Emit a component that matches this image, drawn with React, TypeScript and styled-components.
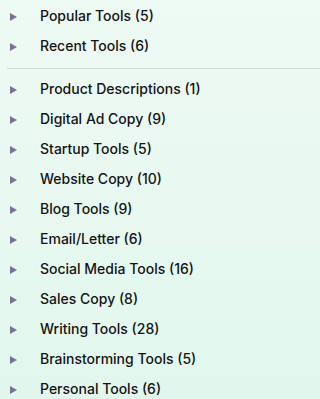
import React from "react";
import styled, { createGlobalStyle } from "styled-components";

const GlobalStyle = createGlobalStyle`
  html, body {
    margin: 0;
    padding: 0;
  }
  body {
    background: linear-gradient(180deg, #eefaf4 0%, #e1f7ed 100%);
    min-height: 399px;
    font-family: Inter, "Noto Sans", sans-serif;
  }
`;

const Sidebar = styled.nav`
  display: flex;
  flex-direction: column;
  padding: 0 0 0 7px;
`;

const Group = styled.ul`
  list-style: none;
  margin: 0;
  padding: 0;
  display: flex;
  flex-direction: column;
`;

const Item = styled.li`
  display: flex;
  align-items: center;
  height: 30px;
  padding-left: 3px;
  gap: 23px;
  color: #141414;
  font-size: 14px;
  font-weight: 500;
  white-space: nowrap;
`;

const Arrow = styled.span`
  width: 0;
  height: 0;
  margin-top: 3px;
  border-top: 4.5px solid transparent;
  border-bottom: 4.5px solid transparent;
  border-left: 7px solid #7c6f9a;
  flex-shrink: 0;
`;

const Divider = styled.hr`
  border: none;
  border-top: 1px solid #d5d3dc;
  margin: 8px 0 4px 0;
`;

const top = [
  { name: "Popular Tools", count: 5 },
  { name: "Recent Tools", count: 6 },
];

const categories = [
  { name: "Product Descriptions", count: 1 },
  { name: "Digital Ad Copy", count: 9 },
  { name: "Startup Tools", count: 5 },
  { name: "Website Copy", count: 10 },
  { name: "Blog Tools", count: 9 },
  { name: "Email/Letter", count: 6 },
  { name: "Social Media Tools", count: 16 },
  { name: "Sales Copy", count: 8 },
  { name: "Writing Tools", count: 28 },
  { name: "Brainstorming Tools", count: 5 },
  { name: "Personal Tools", count: 6 },
];

const App: React.FC = () => {
  return (
    <>
      <GlobalStyle />
      <Sidebar>
        <Group>
          {top.map((t) => (
            <Item key={t.name}>
              <Arrow />
              {t.name} ({t.count})
            </Item>
          ))}
        </Group>
        <Divider />
        <Group>
          {categories.map((c) => (
            <Item key={c.name}>
              <Arrow />
              {c.name} ({c.count})
            </Item>
          ))}
        </Group>
      </Sidebar>
    </>
  );
};

export default App;
